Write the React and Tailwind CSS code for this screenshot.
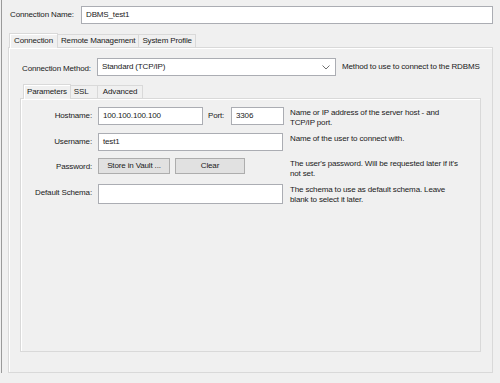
import React from "react";

const font = { fontFamily: "'Liberation Sans', Arial, sans-serif" };

const Field = ({ value = "", className = "" }) => (
  <div className={`h-[18px] shrink-0 bg-white border border-[#abadb3] px-[4px] flex items-center text-[#1a1a1a] ${className}`}>
    {value}
  </div>
);

const Button = ({ children, className = "" }) => (
  <div className={`h-[16px] shrink-0 bg-[#e1e1e1] border border-[#adadad] flex items-center justify-center ${className}`}>
    {children}
  </div>
);

const Row = ({ label, children, desc, className = "" }) => (
  <div className={`flex items-start shrink-0 ${className}`}>
    <div className="w-[77px] text-right pr-[6px] pt-[3px] shrink-0">{label}</div>
    <div className="w-[192px] shrink-0 flex items-start">{children}</div>
    <div className="leading-[10px] text-[#1a1a1a]">{desc}</div>
  </div>
);

const App = () => {
  return (
    <div style={font} className="w-[500px] h-[383px] bg-[#f0f0f0] pl-px pb-[10px] text-[8px] tracking-[-0.15px] text-[#1a1a1a] whitespace-nowrap">
      <div className="h-full border-l border-[#9a9a9a] pl-[6px] pr-[7px] pt-[6px] flex flex-col">
        <div className="flex items-center">
          <div className="w-[73px] pl-[2px] shrink-0">Connection Name:</div>
          <Field value="DBMS_test1" className="flex-1 shrink" />
        </div>

        <div className="flex items-end mt-[8px] pl-[1px] h-[15px]">
          <div className="h-[15px] px-[4px] bg-[#f0f0f0] border border-b-0 border-[#d9d9d9] shadow-[inset_1px_1px_0_#ffffff] flex items-center relative top-px">Connection</div>
          <div className="h-[13px] px-[3px] border-t border-r border-[#d9d9d9] flex items-center">Remote Management</div>
          <div className="h-[13px] px-[3px] border-t border-r border-[#d9d9d9] flex items-center">System Profile</div>
        </div>

        <div className="flex-1 border border-[#d9d9d9] shadow-[inset_1px_1px_0_#ffffff] px-[11px] pt-[10px] pb-[20px] flex flex-col">
          <div className="flex items-center">
            <div className="w-[77px] pl-[2px] pt-[4px] shrink-0">Connection Method:</div>
            <div className="w-[239px] h-[18px] shrink-0 bg-white border border-[#abadb3] flex items-center justify-between px-[4px]">
              <span>Standard (TCP/IP)</span>
              <svg width="8" height="5" viewBox="0 0 8 5" className="mr-[1px]">
                <path d="M0.5 0.5 L4 4 L7.5 0.5" stroke="#707070" fill="none" strokeWidth="1" />
              </svg>
            </div>
            <div className="pl-[6px]">Method to use to connect to the RDBMS</div>
          </div>

          <div className="flex items-end mt-[7px] pl-[3px] h-[15px]">
            <div className="h-[15px] px-[3px] bg-[#f0f0f0] border border-b-0 border-[#d9d9d9] shadow-[inset_1px_1px_0_#ffffff] flex items-center relative top-px">Parameters</div>
            <div className="h-[13px] pl-[3px] w-[27px] border-t border-r border-[#d9d9d9] flex items-center">SSL</div>
            <div className="h-[13px] px-[5px] border-t border-r border-[#d9d9d9] flex items-center">Advanced</div>
          </div>

          <div className="flex-1 border border-[#d9d9d9] shadow-[inset_1px_1px_0_#ffffff] pt-[8px] flex flex-col">
            <Row label="Hostname:" className="h-[26px]" desc={<span className="block pt-[1px]">Name or IP address of the server host - and<br />TCP/IP port.</span>}>
              <Field value="100.100.100.100" className="w-[105px]" />
              <div className="w-[28px] pl-[5px] pt-[3px]">Port:</div>
              <Field value="3306" className="w-[53px]" />
            </Row>
            <Row label="Username:" className="h-[25px]" desc={<span className="block pt-[1px]">Name of the user to connect with.</span>}>
              <Field value="test1" className="w-[185px] h-[17px]" />
            </Row>
            <Row label="Password:" className="h-[26px]" desc={<span className="block pt-[1px]">The user's password. Will be requested later if it's<br />not set.</span>}>
              <Button className="w-[72px]">Store in Vault ...</Button>
              <Button className="w-[70px] ml-[5px]">Clear</Button>
            </Row>
            <Row label="Default Schema:" desc={<span className="block pt-[1px]">The schema to use as default schema. Leave<br />blank to select it later.</span>}>
              <Field className="w-[185px] h-[20px]" />
            </Row>
          </div>
        </div>
      </div>
    </div>
  );
};

export default App;
